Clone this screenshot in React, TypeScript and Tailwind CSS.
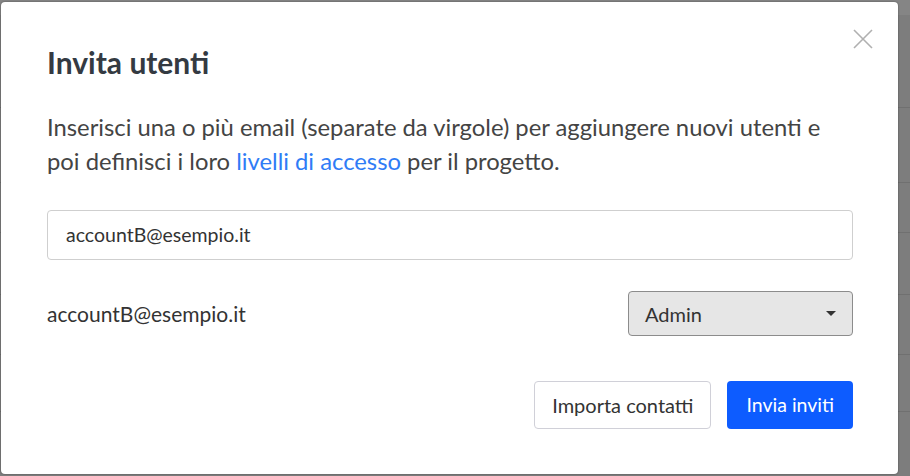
const rows = [15, 108, 183, 233, 295, 355, 412]

export default function App() {
  return (
    <div className="relative w-[910px] h-[476px] overflow-hidden bg-[#7d7d7d] font-['Lato','Noto_Sans',sans-serif]">
      {/* page behind the overlay */}
      <div className="flex flex-col">
        <div className="h-[15px] w-full bg-[#858585]" />
        {rows.slice(1).map((y, i) => (
          <div
            key={i}
            className="h-[1px] w-full bg-[#707070]"
            style={{ marginTop: y - rows[i] - 1 }}
          />
        ))}
      </div>

      {/* modal */}
      <div className="absolute left-[1px] top-[2px] w-[897px] h-[472px] rounded-[4px] bg-white shadow-[0_0_2px_rgba(0,0,0,0.45)] pl-[46px] pr-[45px] pt-[42px]">
        <button className="absolute left-[852px] top-[27px]">
          <svg width="20" height="20" viewBox="0 0 20 20" fill="none" stroke="#b0b0b0" strokeWidth="1.6">
            <path d="M1 1L19 19M19 1L1 19" />
          </svg>
        </button>

        <h2 className="text-[30px] leading-[36px] font-bold text-[#343a42]">Invita utenti</h2>

        <p className="mt-[30px] text-[23.8px] leading-[34px] text-[#444444]">
          Inserisci una o più email (separate da virgole) per aggiungere nuovi utenti e poi definisci i loro{' '}
          <a className="text-[#2f7cf6]">livelli di accesso</a> per il progetto.
        </p>

        <div className="mt-[32px] h-[50px] flex items-center rounded-[4px] border border-[#cfcfcf] px-[18px] text-[19.5px] text-[#333333]">
          accountB@esempio.it
        </div>

        <div className="mt-[31px] flex items-center justify-between">
          <span className="text-[21px] text-[#333333]">accountB@esempio.it</span>
          <div className="w-[225px] h-[45px] flex items-center justify-between rounded-[4px] border border-[#8c8c8c] bg-[#e6e6e6] pl-[16px] pr-[16px] text-[20px] text-[#333333]">
            <span>Admin</span>
            <span className="w-0 h-0 border-l-[5px] border-r-[5px] border-t-[5px] border-l-transparent border-r-transparent border-t-[#333333]" />
          </div>
        </div>

        <div className="mt-[45px] flex justify-end gap-[16px]">
          <button className="h-[48px] px-[17px] rounded-[4px] border border-[#d0d0d8] bg-white text-[20px] text-[#333333]">
            Importa contatti
          </button>
          <button className="h-[48px] px-[19px] rounded-[4px] bg-[#0d5cff] text-[19.5px] text-white">
            Invia inviti
          </button>
        </div>
      </div>
    </div>
  )
}
